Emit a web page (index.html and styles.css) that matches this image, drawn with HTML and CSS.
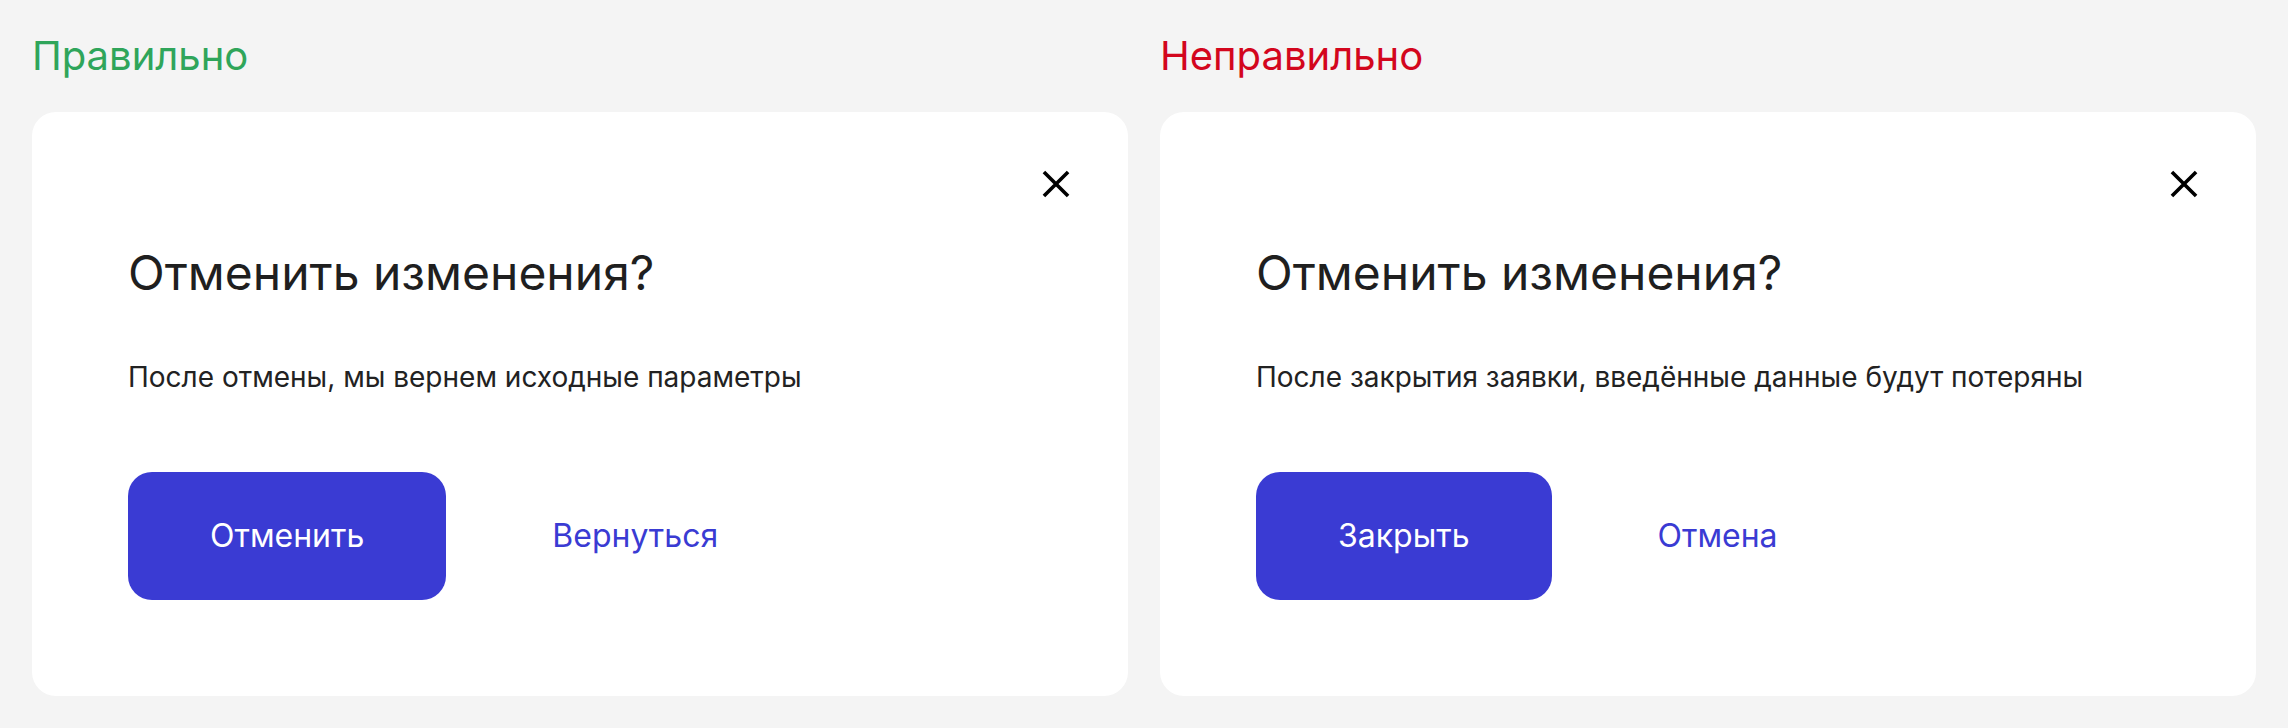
FILE: index.html
```html
<!DOCTYPE html>
<html lang="ru">
<head>
<meta charset="utf-8">
<title>Диалог отмены</title>
<link rel="stylesheet" href="styles.css">
</head>
<body>
<main class="page">
  <section class="column">
    <h2 class="label label-good">Правильно</h2>
    <div class="card">
      <div class="card-head">
        <button class="close" aria-label="Закрыть">
          <svg viewBox="0 0 24 24" width="48" height="48"><path d="M6.6 6.6L17.4 17.4M17.4 6.6L6.6 17.4" fill="none" stroke="#000" stroke-width="1.8" stroke-linecap="square"/></svg>
        </button>
      </div>
      <h1 class="title">Отменить изменения?</h1>
      <p class="text">После отмены, мы вернем исходные параметры</p>
      <div class="actions">
        <button class="btn btn-primary">Отменить</button>
        <button class="btn btn-ghost">Вернуться</button>
      </div>
    </div>
  </section>
  <section class="column">
    <h2 class="label label-bad">Неправильно</h2>
    <div class="card">
      <div class="card-head">
        <button class="close" aria-label="Закрыть">
          <svg viewBox="0 0 24 24" width="48" height="48"><path d="M6.6 6.6L17.4 17.4M17.4 6.6L6.6 17.4" fill="none" stroke="#000" stroke-width="1.8" stroke-linecap="square"/></svg>
        </button>
      </div>
      <h1 class="title">Отменить изменения?</h1>
      <p class="text">После закрытия заявки, введённые данные будут потеряны</p>
      <div class="actions">
        <button class="btn btn-primary">Закрыть</button>
        <button class="btn btn-ghost">Отмена</button>
      </div>
    </div>
  </section>
</main>
</body>
</html>
```
FILE: styles.css
```css
* { box-sizing: border-box; }
html, body {
  margin: 0;
  padding: 0;
  background: #f4f4f4;
}
body {
  font-family: Inter, "Noto Sans", "Liberation Sans", sans-serif;
  color: #1f1f1f;
}
.page {
  display: grid;
  grid-template-columns: 1096px 1096px;
  column-gap: 32px;
  padding: 32px;
}
.column {
  display: flex;
  flex-direction: column;
}
.label {
  margin: 0 0 32px;
  font-size: 40px;
  line-height: 48px;
  font-weight: 400;
}
.label-good { color: #2fa55a; }
.label-bad { color: #d3061d; }
.card {
  background: #fff;
  border-radius: 24px;
  padding: 48px 48px 96px 96px;
  display: flex;
  flex-direction: column;
}
.card-head {
  display: flex;
  justify-content: flex-end;
}
.close {
  width: 48px;
  height: 48px;
  padding: 0;
  border: 0;
  background: none;
  display: block;
  cursor: pointer;
}
.close svg { display: block; }
.title {
  margin: 37px 0 0;
  font-size: 48px;
  line-height: 56px;
  font-weight: 400;
  color: #1f1f1f;
}
.text {
  margin: 52px 0 0;
  font-size: 28px;
  line-height: 48px;
  color: #222;
}
.actions {
  margin-top: 71px;
  display: flex;
  gap: 24px;
}
.btn {
  height: 128px;
  padding: 0 82px;
  border: 0;
  border-radius: 24px;
  font-family: inherit;
  font-size: 32px;
  line-height: 128px;
  font-weight: 400;
  cursor: pointer;
}
.btn-primary {
  background: #3a3bd3;
  color: #fff;
}
.btn-ghost {
  background: transparent;
  color: #3a3bd3;
}
```
